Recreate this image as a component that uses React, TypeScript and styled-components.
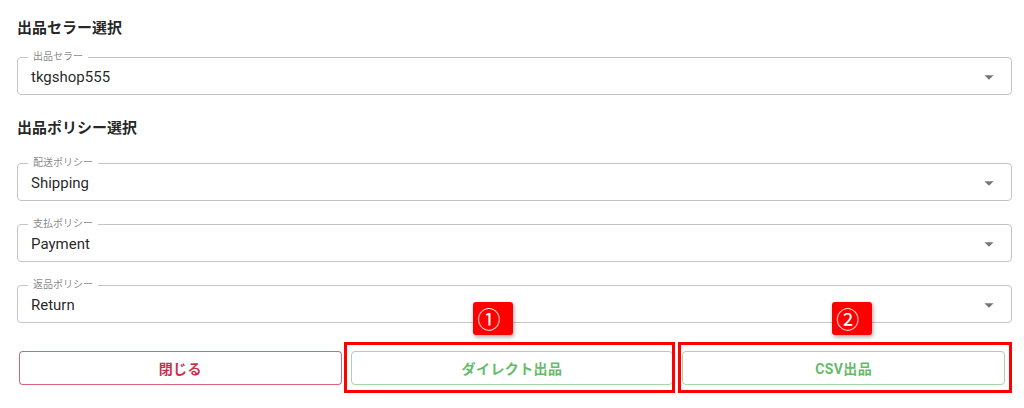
import styled, { createGlobalStyle } from "styled-components";

const GlobalStyle = createGlobalStyle`
  body {
    margin: 0;
    background: #fff;
    font-family: Roboto, "Noto Sans CJK JP", sans-serif;
  }
`;

const Page = styled.div`
  width: 995px;
  padding: 18px 0 23px 17px;
  display: flex;
  flex-direction: column;
`;

const SectionTitle = styled.h3<{ $top: number }>`
  margin: ${({ $top }) => $top}px 0 0;
  height: 21px;
  line-height: 21px;
  font-size: 15px;
  font-weight: 700;
  color: rgba(0, 0, 0, 0.87);
`;

const Field = styled.div<{ $top: number }>`
  position: relative;
  box-sizing: border-box;
  height: 38px;
  margin-top: ${({ $top }) => $top}px;
  border: 1px solid #c4c4c4;
  border-radius: 4px;
  display: flex;
  align-items: center;
  padding: 1px 11px 0 13px;
`;

const FieldLabel = styled.span`
  position: absolute;
  left: 10px;
  top: -7px;
  padding: 0 5px;
  background: #fff;
  font-size: 10px;
  line-height: 12px;
  color: rgba(0, 0, 0, 0.5);
`;

const FieldValue = styled.span`
  flex: 1;
  font-size: 15px;
  color: rgba(0, 0, 0, 0.87);
`;

const Arrow = styled.svg`
  width: 22px;
  height: 22px;
  fill: rgba(0, 0, 0, 0.54);
`;

const ButtonRow = styled.div`
  margin-top: 28px;
  padding: 0 7px 0 2px;
  display: grid;
  grid-template-columns: repeat(3, 1fr);
  gap: 9px;
`;

const ButtonSlot = styled.div`
  position: relative;
`;

const OutlineButton = styled.button<{ $tone: "danger" | "success" }>`
  box-sizing: border-box;
  width: 100%;
  height: 34px;
  background: #fff;
  border-radius: 4px;
  border: 1px solid
    ${({ $tone }) => ($tone === "danger" ? "rgba(200, 50, 79, 0.75)" : "#a5d6a7")};
  color: ${({ $tone }) => ($tone === "danger" ? "#c8324f" : "#66bb6a")};
  font-family: Roboto, "Noto Sans CJK JP", sans-serif;
  font-size: 14px;
  font-weight: 700;
  letter-spacing: 0.4px;
  cursor: pointer;
`;

const Frame = styled.div<{ $left: number; $right: number }>`
  position: absolute;
  top: -9px;
  bottom: -8px;
  left: ${({ $left }) => $left}px;
  right: ${({ $right }) => $right}px;
  border: 3px solid #ff0000;
  pointer-events: none;
`;

const Badge = styled.div<{ $shift: number }>`
  position: absolute;
  top: -43px;
  left: calc(50% + ${({ $shift }) => $shift}px);
  transform: translateX(-50%);
  box-sizing: border-box;
  width: 40px;
  height: 33px;
  padding-left: 4px;
  background: #ff0000;
  border-radius: 3px;
  box-shadow: 1px 2px 4px rgba(0, 0, 0, 0.35);
  color: #fff;
  font-family: "Noto Sans CJK JP", sans-serif;
  font-size: 23px;
  line-height: 33px;
`;

const fields = [
  { label: "出品セラー", value: "tkgshop555" },
  { label: "配送ポリシー", value: "Shipping" },
  { label: "支払ポリシー", value: "Payment" },
  { label: "返品ポリシー", value: "Return" },
];

const SelectField = ({ label, value, top }: { label: string; value: string; top: number }) => (
  <Field $top={top}>
    <FieldLabel>{label}</FieldLabel>
    <FieldValue>{value}</FieldValue>
    <Arrow viewBox="0 0 24 24">
      <path d="M7 10l5 5 5-5z" />
    </Arrow>
  </Field>
);

export default function App() {
  return (
    <>
      <GlobalStyle />
      <Page>
        <SectionTitle $top={0}>出品セラー選択</SectionTitle>
        <SelectField top={18} {...fields[0]} />
        <SectionTitle $top={23}>出品ポリシー選択</SectionTitle>
        <SelectField top={24} {...fields[1]} />
        <SelectField top={23} {...fields[2]} />
        <SelectField top={23} {...fields[3]} />
        <ButtonRow>
          <ButtonSlot>
            <OutlineButton $tone="danger">閉じる</OutlineButton>
          </ButtonSlot>
          <ButtonSlot>
            <OutlineButton $tone="success">ダイレクト出品</OutlineButton>
            <Frame $left={-7} $right={-2}>
              <Badge $shift={-16}>①</Badge>
            </Frame>
          </ButtonSlot>
          <ButtonSlot>
            <OutlineButton $tone="success">CSV出品</OutlineButton>
            <Frame $left={-4} $right={-7}>
              <Badge $shift={7}>②</Badge>
            </Frame>
          </ButtonSlot>
        </ButtonRow>
      </Page>
    </>
  );
}
